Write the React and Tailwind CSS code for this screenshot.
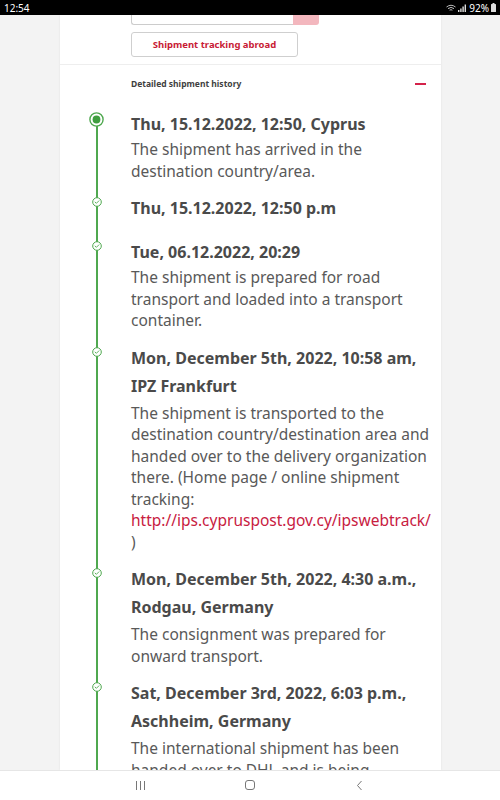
import React from "react";

function Check() {
  return (
    <svg width="10" height="10" viewBox="0 0 10 10" className="block">
      <circle cx="5" cy="5" r="4.3" fill="#fff" stroke="#4fa84f" strokeWidth="1" />
      <path d="M3.1 5.1 L4.4 6.3 L6.9 3.8" fill="none" stroke="#4fa84f" strokeWidth="0.9" strokeLinecap="round" strokeLinejoin="round" />
    </svg>
  );
}

function Dot() {
  return (
    <svg width="15" height="15" viewBox="0 0 15 15" className="block">
      <circle cx="7.5" cy="7.5" r="6.6" fill="#fff" stroke="#4fa84f" strokeWidth="1.4" />
      <circle cx="7.5" cy="7.5" r="3.9" fill="#3f9e3f" />
    </svg>
  );
}

const items = [
  {
    title: ["Thu, 15.12.2022, 12:50, Cyprus"],
    body: "The shipment has arrived in the destination country/area.",
    first: true,
  },
  { title: ["Thu, 15.12.2022, 12:50 p.m"], pb: "pb-[16px]" },
  {
    title: ["Tue, 06.12.2022, 20:29"],
    body: "The shipment is prepared for road transport and loaded into a transport container.",
  },
  {
    title: ["Mon, December 5th, 2022, 10:58 am,", "IPZ Frankfurt"],
    link: true,
  },
  {
    title: ["Mon, December 5th, 2022, 4:30 a.m.,", "Rodgau, Germany"],
    body: "The consignment was prepared for onward transport.",
  },
  {
    title: ["Sat, December 3rd, 2022, 6:03 p.m.,", "Aschheim, Germany"],
    body: "The international shipment has been handed over to DHL and is being prepared for onward transport.",
  },
];

export default function App() {
  return (
    <div className="w-[500px] h-[800px] flex flex-col bg-[#f3f3f3] overflow-hidden font-['Noto_Sans',sans-serif]">
      {/* status bar */}
      <div className="h-[15px] bg-black flex items-center justify-between px-[4px] text-white text-[10px] leading-none shrink-0 relative z-10">
        <span>12:54</span>
        <div className="flex items-center gap-[2px] text-[10px]">
          <svg width="10" height="8" viewBox="0 0 10 8">
            <path d="M0.5 3 Q5 -0.5 9.5 3" fill="none" stroke="#bbb" strokeWidth="1" />
            <path d="M2 4.6 Q5 2.2 8 4.6" fill="none" stroke="#bbb" strokeWidth="1" />
            <path d="M3.6 6.2 Q5 5.2 6.4 6.2" fill="none" stroke="#bbb" strokeWidth="1" />
          </svg>
          <svg width="8" height="8" viewBox="0 0 8 8">
            <rect x="0" y="6" width="1.4" height="2" fill="#ddd" />
            <rect x="2.2" y="4.5" width="1.4" height="3.5" fill="#ddd" />
            <rect x="4.4" y="2.5" width="1.4" height="5.5" fill="#ddd" />
            <rect x="6.6" y="0.5" width="1.4" height="7.5" fill="#ddd" />
          </svg>
          <span className="ml-[1px]">92%</span>
          <svg width="5" height="9" viewBox="0 0 5 9">
            <rect x="1.5" y="0" width="2" height="1" fill="#ddd" />
            <rect x="0" y="1" width="5" height="8" rx="0.5" fill="#ddd" />
          </svg>
        </div>
      </div>

      {/* main */}
      <div className="flex-1 overflow-hidden">
        <div className="ml-[60px] w-[381px] h-full bg-white shadow-[0_0_2px_rgba(0,0,0,0.08)] flow-root">
          <div className="pl-[71px] flex -mt-[16px]">
            <div className="w-[162px] h-[26px] border border-[#cccccc] rounded-l-[3px] border-r-0"></div>
            <div className="w-[26px] h-[26px] bg-[#f3b7be] rounded-r-[3px]"></div>
          </div>
          <div className="ml-[71px] mt-[7px] w-[167px] h-[25px] border border-[#cfcfcf] rounded-[3px] flex items-center justify-center text-[9.5px] font-bold text-[#c81b35] leading-none">
            Shipment tracking abroad
          </div>
          <div className="mt-[7px] border-t border-[#eeeeee]"></div>
          <div className="h-[38px] flex items-center justify-between pl-[71px] pr-[15px]">
            <span className="text-[8.5px] font-bold text-[#3f3f3f] leading-none">Detailed shipment history</span>
            <span className="w-[11px] h-[2px] bg-[#d4224a] block"></span>
          </div>

          <div className="relative pt-[7px]">
            <div className="absolute left-[36px] top-[16px] bottom-0 w-[1.5px] bg-[#4fa84f]"></div>
            {items.map((it, i) => (
              <div key={i} className={`relative pl-[71px] pr-[4px] ${it.pb || "pb-[12px]"}`}>
                <div className={it.first ? "absolute left-[29px] top-[2px]" : "absolute left-[32px] top-[3px]"}>
                  {it.first ? <Dot /> : <Check />}
                </div>
                {it.title.map((t, j) => (
                  <div key={j} className="text-[16px] leading-[28px] font-bold text-[#4a4a4a] whitespace-nowrap">
                    {t}
                  </div>
                ))}
                {it.body && (
                  <div className={`${it.title.length > 1 ? "mt-[3px]" : "mt-[1px]"} text-[15.5px] leading-[21.5px] text-[#595959]`}>{it.body}</div>
                )}
                {it.link && (
                  <div className="mt-[3px] text-[15.5px] leading-[21.5px] text-[#595959]">
                    The shipment is transported to the destination country/destination area and handed over to the delivery organization there. (Home page / online shipment tracking:{" "}
                    <span className="text-[#c8203f] whitespace-nowrap">http://ips.cypruspost.gov.cy/ipswebtrack/</span>
                    <br />)
                  </div>
                )}
              </div>
            ))}
          </div>
        </div>
      </div>

      {/* nav bar */}
      <div className="h-[30px] bg-white border-t border-[#e6e6e6] shrink-0 relative z-10 flex items-center">
        <div className="w-full relative h-full">
          <div className="absolute left-[136px] top-[10px] flex gap-[3px]">
            <span className="w-[1px] h-[9px] bg-[#777]"></span>
            <span className="w-[1px] h-[9px] bg-[#777]"></span>
            <span className="w-[1px] h-[9px] bg-[#777]"></span>
          </div>
          <div className="absolute left-[245px] top-[9px] w-[10px] h-[10px] border border-[#777] rounded-[3px]"></div>
          <svg className="absolute left-[356px] top-[9px]" width="7" height="11" viewBox="0 0 7 11">
            <path d="M5.5 1 L1.5 5.5 L5.5 10" fill="none" stroke="#777" strokeWidth="1" />
          </svg>
        </div>
      </div>
    </div>
  );
}
